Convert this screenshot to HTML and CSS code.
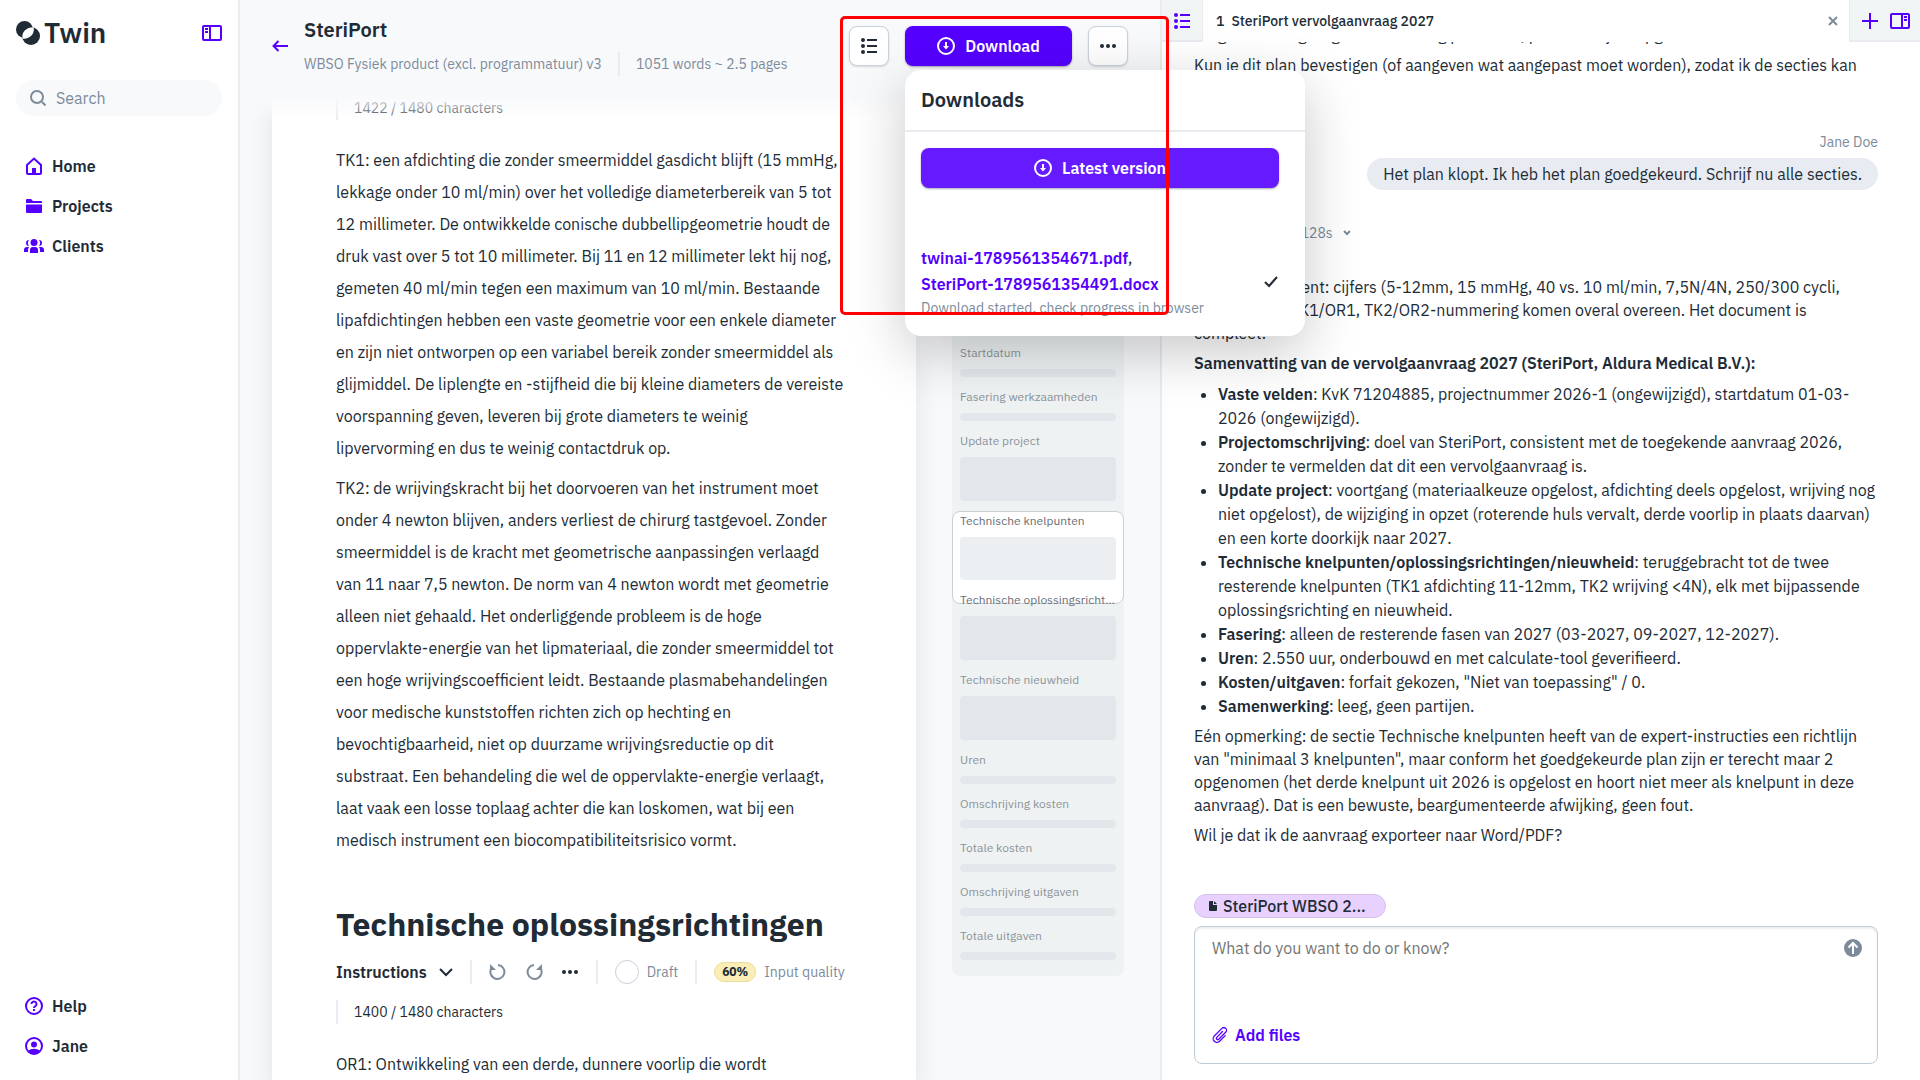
FILE: index.html
```html
<!DOCTYPE html>
<html lang="en">
  <head>
    <meta charset="UTF-8" />
    <meta name="viewport" content="width=device-width, initial-scale=1.0" />
    <title>SteriPort - Twin</title>
    <link rel="stylesheet" href="styles.css">
  </head>
  <body>
    <aside class="sidebar">
      <div class="sidebar-top">
        <a class="logo" href="#">
          <svg width="24" height="24" viewBox="0 0 24 24" aria-hidden="true">
            <circle cx="8.500" cy="8.500" r="8.500" fill="#212b36" />
            <circle cx="15" cy="15" r="9" fill="#212b36" />
            <path d="M6.500 17.800C5.200 11 10 6.200 17.600 6.200C19 13 14 17.800 6.500 17.800Z" fill="#fff" />
          </svg>
          <span>Twin</span>
        </a>
        <button class="icon-btn" aria-label="Collapse sidebar">
          <svg width="20" height="16" viewBox="0 0 20 16" fill="none" stroke="#50f" stroke-width="2">
            <rect x="1" y="1" width="18" height="14" rx="1" />
            <path d="M8 1v14M3 4h3M3 7h3" />
          </svg>
        </button>
      </div>

      <label class="search">
        <svg width="16" height="16" viewBox="0 0 16 16" fill="none" stroke="#7c8b9a" stroke-width="2">
          <circle cx="7" cy="7" r="6" />
          <path d="M12 12l3.500 3.500" />
        </svg>
        <input type="search" placeholder="Search" aria-label="Search" />
      </label>

      <nav class="nav">
        <a href="#">
          <svg width="20" height="20" viewBox="0 0 20 20">
            <path d="M3 9l7-6.500L17 9v8a1 1 0 0 1-1 1H4a1 1 0 0 1-1-1z" fill="none" stroke="#50f" stroke-width="2" />
            <path d="M8 12h4v6H8z" fill="#50f" />
          </svg>
          Home
        </a>
        <a href="#">
          <svg width="20" height="20" viewBox="0 0 20 20" fill="#50f">
            <path d="M2 4a1 1 0 0 1 1-1h4l2 2h8a1 1 0 0 1 1 1v1H2zM2 8.500h16V16a1 1 0 0 1-1 1H3a1 1 0 0 1-1-1z" />
          </svg>
          Projects
        </a>
        <a href="#">
          <svg width="20" height="20" viewBox="0 0 20 20" fill="#50f">
            <circle cx="10" cy="6.500" r="3.500" />
            <path d="M6 17v-3a3 3 0 0 1 3-3h2a3 3 0 0 1 3 3v3z" />
            <path d="M5 4a3 3 0 0 0 0 6 5 5 0 0 1 0-6zM15 4a3 3 0 0 1 0 6 5 5 0 0 0 0-6z" />
            <path d="M0 16v-2a3 3 0 0 1 3-3h2a5 5 0 0 0-1 3v2zM20 16v-2a3 3 0 0 0-3-3h-2a5 5 0 0 1 1 3v2z" />
          </svg>
          Clients
        </a>
      </nav>

      <nav class="nav nav-bottom">
        <a href="#">
          <svg width="20" height="20" viewBox="0 0 20 20" fill="none" stroke="#50f" stroke-width="2">
            <circle cx="10" cy="10" r="8" />
            <path d="M7.500 8a2.500 2.500 0 1 1 3.800 2.100c-.9.500-1.300.9-1.300 1.900M10 13v2" />
          </svg>
          Help
        </a>
        <a href="#">
          <svg width="20" height="20" viewBox="0 0 20 20">
            <circle cx="10" cy="10" r="8" fill="none" stroke="#50f" stroke-width="2" />
            <circle cx="10" cy="8.500" r="3" fill="#50f" />
            <path d="M4 15c3-3 9-3 12 0-3 4-9 4-12 0z" fill="#50f" />
          </svg>
          Jane
        </a>
      </nav>
    </aside>

    <main class="main">
      <header class="header">
        <a class="back" href="#" aria-label="Back">
          <svg width="16" height="12" viewBox="0 0 16 12" fill="none" stroke="#50f" stroke-width="2">
            <path d="M16 6H1M6.500 1L1.500 6l5 5" />
          </svg>
        </a>
        <div class="heading">
          <h1>SteriPort</h1>
          <div class="meta">
            <span>WBSO Fysiek product (excl. programmatuur) v3</span>
            <span class="divider"></span>
            <span>1051 words ~ 2.5 pages</span>
          </div>
        </div>
        <div class="actions">
          <button class="btn" aria-label="Outline">
            <svg width="18" height="16" viewBox="0 0 18 16" fill="#212b36">
              <circle cx="3" cy="2" r="2" /><circle cx="3" cy="8" r="2" /><circle cx="3" cy="14" r="2" />
              <path d="M7 1h10v2H7zM7 7h10v2H7zM7 13h10v2H7z" />
            </svg>
          </button>
          <div class="download">
            <button class="btn btn-primary btn-download">
              <svg width="18" height="18" viewBox="0 0 18 18" fill="none" stroke="#fff" stroke-width="2">
                <circle cx="9" cy="9" r="8" />
                <path d="M9 5v5" />
                <path d="M6 9h6l-3 3.500z" fill="#fff" stroke="none" />
              </svg>
              Download
            </button>
            <section class="popup">
              <h2>Downloads</h2>
              <div class="popup-body">
                <button class="btn btn-primary btn-latest">
                  <svg width="18" height="18" viewBox="0 0 18 18" fill="none" stroke="#fff" stroke-width="2">
                    <circle cx="9" cy="9" r="8" />
                    <path d="M9 5v5" />
                    <path d="M6 9h6l-3 3.500z" fill="#fff" stroke="none" />
                  </svg>
                  Latest version
                </button>
                <div class="files">
                  <div>
                    <p><a href="#">twinai-1789561354671.pdf</a>,<br /><a href="#">SteriPort-1789561354491.docx</a></p>
                    <small>Download started, check progress in browser</small>
                  </div>
                  <svg width="16" height="12" viewBox="0 0 16 12" fill="none" stroke="#212b36" stroke-width="2">
                    <path d="M2 6l4 4 8-9" />
                  </svg>
                </div>
              </div>
            </section>
          </div>
          <button class="btn" aria-label="More">
            <svg width="16" height="4" viewBox="0 0 16 4" fill="#212b36">
              <circle cx="2" cy="2" r="2" /><circle cx="8" cy="2" r="2" /><circle cx="14" cy="2" r="2" />
            </svg>
          </button>
        </div>
      </header>

      <div class="workspace">
        <article class="document">
          <div class="count">1422 / 1480 characters</div>
          <div class="text">
            <p>
              TK1: een afdichting die zonder smeermiddel gasdicht blijft (15 mmHg,<br />
              lekkage onder 10 ml/min) over het volledige diameterbereik van 5 tot<br />
              12 millimeter. De ontwikkelde conische dubbellipgeometrie houdt de<br />
              druk vast over 5 tot 10 millimeter. Bij 11 en 12 millimeter lekt hij nog,<br />
              gemeten 40 ml/min tegen een maximum van 10 ml/min. Bestaande<br />
              lipafdichtingen hebben een vaste geometrie voor een enkele diameter<br />
              en zijn niet ontworpen op een variabel bereik zonder smeermiddel als<br />
              glijmiddel. De liplengte en -stijfheid die bij kleine diameters de vereiste<br />
              voorspanning geven, leveren bij grote diameters te weinig<br />
              lipvervorming en dus te weinig contactdruk op.
            </p>
            <p>
              TK2: de wrijvingskracht bij het doorvoeren van het instrument moet<br />
              onder 4 newton blijven, anders verliest de chirurg tastgevoel. Zonder<br />
              smeermiddel is de kracht met geometrische aanpassingen verlaagd<br />
              van 11 naar 7,5 newton. De norm van 4 newton wordt met geometrie<br />
              alleen niet gehaald. Het onderliggende probleem is de hoge<br />
              oppervlakte-energie van het lipmateriaal, die zonder smeermiddel tot<br />
              een hoge wrijvingscoefficient leidt. Bestaande plasmabehandelingen<br />
              voor medische kunststoffen richten zich op hechting en<br />
              bevochtigbaarheid, niet op duurzame wrijvingsreductie op dit<br />
              substraat. Een behandeling die wel de oppervlakte-energie verlaagt,<br />
              laat vaak een losse toplaag achter die kan loskomen, wat bij een<br />
              medisch instrument een biocompatibiliteitsrisico vormt.
            </p>
          </div>
          <h2>Technische oplossingsrichtingen</h2>
          <div class="toolbar">
            <button class="instructions">
              Instructions
              <svg width="14" height="10" viewBox="0 0 14 10" fill="none" stroke="#212b36" stroke-width="2">
                <path d="M1 2l6 6 6-6" />
              </svg>
            </button>
            <span class="divider"></span>
            <div class="toolbar-icons">
              <button aria-label="Undo">
                <svg width="18" height="18" viewBox="0 0 18 18" fill="none" stroke="#7c8b9a" stroke-width="2">
                  <path d="M3 4.500A7 7 0 1 0 9 2" />
                  <path d="M1 1v6h6z" fill="#7c8b9a" stroke="none" />
                </svg>
              </button>
              <button aria-label="Redo">
                <svg width="18" height="18" viewBox="0 0 18 18" fill="none" stroke="#7c8b9a" stroke-width="2">
                  <path d="M15 4.500A7 7 0 1 1 9 2" />
                  <path d="M17 1v6h-6z" fill="#7c8b9a" stroke="none" />
                </svg>
              </button>
              <button aria-label="More">
                <svg width="18" height="4" viewBox="-1 0 18 4" fill="#212b36">
                  <circle cx="2" cy="2" r="2" /><circle cx="8" cy="2" r="2" /><circle cx="14" cy="2" r="2" />
                </svg>
              </button>
            </div>
            <span class="divider"></span>
            <label class="draft"><input type="checkbox" />Draft</label>
            <span class="divider"></span>
            <span class="quality"><b>60%</b>Input quality</span>
          </div>
          <div class="count">1400 / 1480 characters</div>
          <div class="text">
            <p>OR1: Ontwikkeling van een derde, dunnere voorlip die wordt</p>
          </div>
        </article>

        <div class="outline">
          <div class="viewport"></div>
          <ul>
            <li><span>Startdatum</span><i></i></li>
            <li><span>Fasering werkzaamheden</span><i></i></li>
            <li class="long"><span>Update project</span><i></i></li>
            <li class="long active"><span>Technische knelpunten</span><i></i></li>
            <li class="long next"><span>Technische oplossingsrichtingen</span><i></i></li>
            <li class="long"><span>Technische nieuwheid</span><i></i></li>
            <li><span>Uren</span><i></i></li>
            <li><span>Omschrijving kosten</span><i></i></li>
            <li><span>Totale kosten</span><i></i></li>
            <li><span>Omschrijving uitgaven</span><i></i></li>
            <li><span>Totale uitgaven</span><i></i></li>
          </ul>
        </div>
      </div>
    </main>

    <section class="chat">
      <div class="tabs">
        <button class="tabs-list" aria-label="Chats">
          <svg width="18" height="16" viewBox="0 0 18 16" fill="#50f">
            <circle cx="3" cy="2" r="2" /><circle cx="3" cy="8" r="2" /><circle cx="3" cy="14" r="2" />
            <path d="M7 1h10v2H7zM7 7h10v2H7zM7 13h10v2H7z" />
          </svg>
        </button>
        <div class="tab">
          <span>1</span>
          <span>SteriPort vervolgaanvraag 2027</span>
          <button class="icon-btn" aria-label="Close tab">
            <svg width="10" height="10" viewBox="0 0 10 10" fill="none" stroke="#7c8b9a" stroke-width="2">
              <path d="M1 1l8 8M9 1L1 9" />
            </svg>
          </button>
        </div>
        <div class="tabs-actions">
          <button class="icon-btn" aria-label="New chat">
            <svg width="16" height="16" viewBox="0 0 16 16" stroke="#50f" stroke-width="2">
              <path d="M8 0v16M0 8h16" />
            </svg>
          </button>
          <button class="icon-btn" aria-label="Collapse chat">
            <svg width="20" height="16" viewBox="0 0 20 16" fill="none" stroke="#50f" stroke-width="2">
              <rect x="1" y="1" width="18" height="14" rx="1" />
              <path d="M12 1v14M14 4h3M14 7h3" />
            </svg>
          </button>
        </div>
      </div>

      <div class="messages">
        <p>Na goedkeuring volgt de uitwerking per sectie, passend bij de opgave.</p>
        <p>
          Kun je dit plan bevestigen (of aangeven wat aangepast moet worden), zodat ik de secties kan<br />
          gaan schrijven?
        </p>
        <div class="author">Jane Doe</div>
        <div class="bubble">Het plan klopt. Ik heb het plan goedgekeurd. Schrijf nu alle secties.</div>
        <button class="thinking">
          Thought during 128s
          <svg width="8" height="6" viewBox="0 0 8 6" fill="none" stroke="#7c8b9a" stroke-width="2">
            <path d="M1 1l3 3 3-3" />
          </svg>
        </button>
        <p>
          Van het document: cijfers (5-12mm, 15 mmHg, 40 vs. 10 ml/min, 7,5N/4N, 250/300 cycli,<br />
          uren) met de TK1/OR1, TK2/OR2-nummering komen overal overeen. Het document is<br />
          compleet.
        </p>
        <p><strong>Samenvatting van de vervolgaanvraag 2027 (SteriPort, Aldura Medical B.V.):</strong></p>
        <ul>
          <li><strong>Vaste velden</strong>: KvK 71204885, projectnummer 2026-1 (ongewijzigd), startdatum 01-03-<br />2026 (ongewijzigd).</li>
          <li><strong>Projectomschrijving</strong>: doel van SteriPort, consistent met de toegekende aanvraag 2026,<br />zonder te vermelden dat dit een vervolgaanvraag is.</li>
          <li><strong>Update project</strong>: voortgang (materiaalkeuze opgelost, afdichting deels opgelost, wrijving nog<br />niet opgelost), de wijziging in opzet (roterende huls vervalt, derde voorlip in plaats daarvan)<br />en een korte doorkijk naar 2027.</li>
          <li><strong>Technische knelpunten/oplossingsrichtingen/nieuwheid</strong>: teruggebracht tot de twee<br />resterende knelpunten (TK1 afdichting 11-12mm, TK2 wrijving &lt;4N), elk met bijpassende<br />oplossingsrichting en nieuwheid.</li>
          <li><strong>Fasering</strong>: alleen de resterende fasen van 2027 (03-2027, 09-2027, 12-2027).</li>
          <li><strong>Uren</strong>: 2.550 uur, onderbouwd en met calculate-tool geverifieerd.</li>
          <li><strong>Kosten/uitgaven</strong>: forfait gekozen, "Niet van toepassing" / 0.</li>
          <li><strong>Samenwerking</strong>: leeg, geen partijen.</li>
        </ul>
        <p>
          Eén opmerking: de sectie Technische knelpunten heeft van de expert-instructies een richtlijn<br />
          van "minimaal 3 knelpunten", maar conform het goedgekeurde plan zijn er terecht maar 2<br />
          opgenomen (het derde knelpunt uit 2026 is opgelost en hoort niet meer als knelpunt in deze<br />
          aanvraag). Dat is een bewuste, beargumenteerde afwijking, geen fout.
        </p>
        <p>Wil je dat ik de aanvraag exporteer naar Word/PDF?</p>
      </div>

      <form class="composer">
        <button type="button" class="chip">
          <svg width="9" height="10" viewBox="0 0 9 10" fill="#212b36">
            <path d="M0 1a1 1 0 0 1 1-1h3v4h4v5a1 1 0 0 1-1 1H1a1 1 0 0 1-1-1zM5 0l3 3H5z" />
          </svg>
          SteriPort WBSO 2...
        </button>
        <div class="composer-box">
          <div class="composer-row">
            <textarea placeholder="What do you want to do or know?" aria-label="Message"></textarea>
            <button type="button" class="icon-btn" aria-label="Send">
              <svg width="18" height="18" viewBox="0 0 18 18">
                <circle cx="9" cy="9" r="9" fill="#7c8b9a" />
                <path d="M9 15V4M4.500 8.500L9 4l4.500 4.500" fill="none" stroke="#fff" stroke-width="2" />
              </svg>
            </button>
          </div>
          <button type="button" class="add-files">
            <svg width="16" height="16" viewBox="0 0 16 16" fill="none" stroke="#50f" stroke-width="1.300" stroke-linecap="round">
              <path d="M10.500 4.500L4.800 10.400a1.300 1.300 0 0 0 1.900 1.900l7-7.100a2.600 2.600 0 0 0-3.800-3.800L2.300 9a3.700 3.700 0 0 0 5.300 5.300l5.600-5.700" />
            </svg>
            Add files
          </button>
        </div>
      </form>
    </section>

    <div class="marker"></div>
  </body>
</html>
```

FILE: styles.css
```css
* {
  box-sizing: border-box;
  margin: 0;
  padding: 0;
}

body {
  display: grid;
  grid-template-columns: 240px minmax(0, 23fr) minmax(0, 19fr);
  height: 100vh;
  overflow: hidden;
  font-family: "IBM Plex Sans", Roboto, sans-serif;
  font-size: 16px;
  line-height: 24px;
  color: #212b36;
  background: #fff;
}

button,
input,
textarea {
  font: inherit;
  color: inherit;
  border: none;
  background: none;
}

button {
  cursor: pointer;
}

a {
  color: inherit;
  text-decoration: none;
}

svg {
  display: block;
  flex: none;
}

.icon-btn {
  display: flex;
  align-items: center;
}

.divider {
  width: 2px;
  height: 24px;
  background: #e8ebf1;
}

/* sidebar */

.sidebar {
  display: flex;
  flex-direction: column;
  padding: 16px 16px 14px;
  border-right: 2px solid #e8ecf1;
}

.sidebar-top {
  display: flex;
  justify-content: space-between;
  align-items: center;
  height: 34px;
}

.logo {
  display: flex;
  align-items: center;
  gap: 4px;
  font-size: 28px;
  line-height: 32px;
  font-weight: 600;
}

.search {
  display: flex;
  align-items: center;
  gap: 10px;
  height: 36px;
  margin-top: 30px;
  padding: 0 14px;
  border-radius: 18px;
  background: #f8f9fb;
}

.search input {
  width: 100%;
  outline: none;
}

.search input::placeholder {
  color: #7c8b9a;
}

.nav {
  margin-top: 30px;
}

.nav a {
  display: flex;
  align-items: center;
  gap: 8px;
  height: 40px;
  padding-left: 8px;
  font-weight: 600;
}

.nav-bottom {
  margin-top: auto;
}

/* main */

.main {
  display: flex;
  flex-direction: column;
  min-height: 0;
  background: #f8f9fb;
}

.header {
  position: relative;
  z-index: 2;
  display: flex;
  align-items: center;
  gap: 16px;
  height: 96px;
  padding: 0 32px 4px;
  background: #f8f9fb;
}

.header::after {
  content: "";
  position: absolute;
  top: 96px;
  left: 0;
  right: 0;
  height: 26px;
  background: linear-gradient(#f8f9fb, rgba(248, 249, 251, 0));
}

.heading {
  display: flex;
  flex-direction: column;
  gap: 8px;
}

.heading h1 {
  font-size: 20px;
  line-height: 28px;
  font-weight: 600;
}

.meta {
  display: flex;
  gap: 16px;
  color: #7c8b9a;
  font-size: 14px;
}

.actions {
  position: relative;
  z-index: 1;
  display: flex;
  gap: 16px;
  margin-left: auto;
}

.btn {
  display: flex;
  align-items: center;
  justify-content: center;
  gap: 10px;
  width: 40px;
  height: 40px;
  border: 1px solid #c9d1da;
  border-radius: 8px;
  background: #fff;
  font-weight: 600;
  box-shadow: 0 1px 2px rgba(33, 43, 54, 0.15);
}

.btn-primary {
  border: none;
  background: #50f;
  color: #fff;
  box-shadow: 0 1px 2px rgba(33, 43, 54, 0.4);
}

.download {
  position: relative;
}

.btn-download {
  width: 167px;
}

.btn-latest {
  width: 100%;
  background: #661aff;
}

.popup {
  position: absolute;
  top: 44px;
  left: 0;
  width: 400px;
  border-radius: 16px;
  background: #fff;
  box-shadow: 0 16px 56px rgba(0, 0, 0, 0.22);
}

.popup h2 {
  padding: 16px;
  border-bottom: 2px solid #e8ecf1;
  font-size: 20px;
  line-height: 28px;
  font-weight: 600;
}

.popup-body {
  padding: 16px 26px 17px 16px;
}

.files {
  display: flex;
  align-items: center;
  justify-content: space-between;
  margin-top: 57px;
}

.files p {
  line-height: 26px;
}

.files a {
  color: #50f;
  font-weight: 600;
}

.files small {
  display: block;
  font-size: 14px;
  line-height: 22px;
  color: #7c8b9a;
}

.workspace {
  display: flex;
  align-items: flex-start;
  gap: 36px;
  flex: 1;
  min-height: 0;
  padding: 0 36px 0 32px;
}

.document {
  flex: 1;
  align-self: stretch;
  padding: 0 64px;
  background: #fff;
  box-shadow: 0 12px 24px rgba(33, 43, 54, 0.1);
}

.count {
  margin-bottom: 24px;
  padding-left: 16px;
  border-left: 2px solid #e8ebf1;
  font-size: 14px;
}

.text {
  white-space: nowrap;
  line-height: 32px;
}

.text p + p {
  margin-top: 8px;
}

.document h2 {
  margin: 48px 0 16px;
  font-size: 32px;
  line-height: 40px;
  white-space: nowrap;
}

.toolbar {
  display: flex;
  align-items: center;
  gap: 17px;
  margin-bottom: 16px;
}

.toolbar-icons {
  display: flex;
  align-items: center;
  gap: 18px;
}

.instructions {
  display: flex;
  align-items: center;
  gap: 12px;
  font-weight: 600;
}

.draft,
.quality {
  display: flex;
  align-items: center;
  gap: 8px;
  color: #7c8b9a;
  font-size: 14px;
  white-space: nowrap;
}

.draft input {
  appearance: none;
  width: 24px;
  height: 24px;
  border: 1px solid #c9d1da;
  border-radius: 50%;
}

.quality b {
  padding: 0 7px;
  border: 1px solid #ebdc9d;
  border-radius: 10px;
  background: #faedb5;
  color: #212b36;
  font-size: 12px;
  line-height: 18px;
}

/* outline */

.outline {
  position: relative;
  width: 172px;
  margin-top: 225px;
  padding: 24px 8px 4px;
  border-radius: 8px;
  background: #eef2f3;
  font-size: 12px;
  line-height: 16px;
  color: #8c9298;
}

.outline ul {
  position: relative;
  list-style: none;
}

.outline li {
  margin-bottom: 12px;
}

.outline span {
  display: block;
  margin-bottom: 8px;
  overflow: hidden;
  text-overflow: ellipsis;
  white-space: nowrap;
}

.outline i {
  display: block;
  height: 8px;
  border-radius: 4px;
  background: #e3e7ec;
}

.outline .long i {
  height: 44px;
}

.outline .active,
.outline .next span {
  color: #696e75;
}

.outline .active i {
  height: 43px;
  background: #eceff2;
}

.viewport {
  position: absolute;
  top: 190px;
  left: 0;
  right: 0;
  height: 93px;
  border: 1px solid #c9d1d6;
  border-radius: 8px;
  background: #fff;
}

/* chat */

.chat {
  display: flex;
  flex-direction: column;
  min-height: 0;
  border-left: 2px solid #e8ebf1;
}

.tabs {
  display: flex;
  height: 42px;
}

.tabs-list,
.tabs-actions {
  display: flex;
  align-items: center;
  background: #f2f5f6;
  box-shadow: inset 0 -2px #e8ecf0;
}

.tabs-list {
  padding: 0 11px;
  border-right: 1px solid #e8ecf0;
}

.tabs-actions {
  gap: 12px;
  padding: 0 10px 0 12px;
  border-left: 1px solid #e8ecf0;
}

.tab {
  display: flex;
  flex: 1;
  align-items: center;
  gap: 7px;
  padding: 0 11px 0 13px;
  font-size: 14px;
  font-weight: 500;
}

.tab .icon-btn {
  margin-left: auto;
}

.messages {
  display: flex;
  flex: 1;
  flex-direction: column;
  justify-content: flex-end;
  gap: 7px;
  min-height: 0;
  overflow: hidden;
  padding: 0 42px 47px 32px;
  line-height: 23px;
  white-space: nowrap;
}

.messages strong {
  font-weight: 600;
}

.messages ul {
  padding-left: 24px;
  line-height: 24px;
}

.author {
  align-self: flex-end;
  margin: 23px 0 -3px;
  color: #7c8b9a;
  font-size: 14px;
  line-height: 24px;
}

.bubble {
  align-self: flex-end;
  padding: 4px 16px;
  border-radius: 16px;
  background: #e8ecf2;
  line-height: 24px;
}

.thinking {
  display: flex;
  align-items: center;
  gap: 10px;
  margin: 24px 0;
  padding-left: 8px;
  color: #7c8b9a;
  font-size: 14px;
  line-height: 24px;
}

.composer {
  padding: 0 42px 16px 32px;
}

.chip {
  display: flex;
  align-items: center;
  gap: 5px;
  height: 24px;
  padding: 0 19px 0 14px;
  border: 1px solid #d5c0ea;
  border-radius: 12px;
  background: #e8d1fe;
  font-weight: 500;
}

.composer-box {
  display: flex;
  flex-direction: column;
  justify-content: space-between;
  height: 138px;
  margin-top: 8px;
  padding: 9px 15px 16px 17px;
  border: 1px solid #bfcbd6;
  border-radius: 8px;
  box-shadow: inset 0 2px 2px rgba(33, 43, 54, 0.08);
}

.composer-row {
  display: flex;
  align-items: flex-start;
}

.composer-row textarea {
  flex: 1;
  height: 60px;
  resize: none;
  outline: none;
}

.composer-row textarea::placeholder {
  color: #757575;
}

.composer-row .icon-btn {
  height: 24px;
}

.add-files {
  display: flex;
  align-items: center;
  gap: 7px;
  color: #50f;
  font-weight: 600;
}

/* highlight frame drawn over the download menu */

.marker {
  position: absolute;
  z-index: 10;
  top: 16px;
  left: 840px;
  width: 329px;
  height: 299px;
  border: 3px solid #f00;
  border-radius: 5px;
  pointer-events: none;
}
```
